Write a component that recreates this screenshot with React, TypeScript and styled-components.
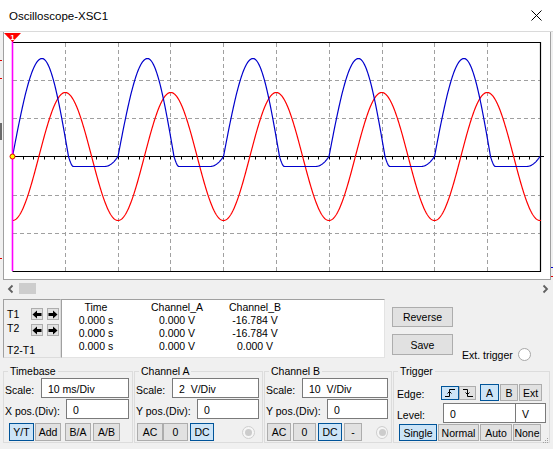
import React from 'react'
import styled, { createGlobalStyle } from 'styled-components'

const GlobalStyle = createGlobalStyle`
  html, body { margin: 0; padding: 0; background: #f0f0f0; }
  body { font-family: "Liberation Sans", Arial, sans-serif; font-size: 10.5px; color: #000; }
  * { box-sizing: border-box; }
`

// scope trace geometry (page coordinates)
const P = 105.5
const X0 = 12.5
const AXIS = 156.5

const blueAt = (x: number) => {
  const t = (((x - X0) % P) + P) % P
  let v
  if (t < 29.5) v = 98 * Math.sin((Math.PI / 2) * (t / 29.5))
  else if (t < 56) v = 98 * Math.cos((Math.PI / 2) * ((t - 29.5) / 26.5))
  else if (t < 61) v = -10 * Math.sin((Math.PI / 2) * ((t - 56) / 5))
  else if (t < 92) v = -10
  else v = -10 + 10 * Math.pow((t - 92) / 13.5, 2)
  return AXIS - v
}

const redAt = (x: number) => AXIS + 64 * Math.cos((2 * Math.PI * (x - X0)) / P)

const trace = (fn: (x: number) => number, from: number, to: number) => {
  const pts: string[] = []
  for (let x = from; x <= to; x += 0.5) pts.push(`${x},${fn(x).toFixed(2)}`)
  return pts.join(' ')
}

const BLUE = trace(blueAt, 12.5, 540)
const RED = trace(redAt, 12.5, 541)
const VLINES = Array.from({ length: 9 }, (_, i) => Math.round(12 + (i + 1) * 52.8) + 0.5)
const HLINES = [80.5, 118.5, 195.5, 233.5]
const TICKS = Array.from({ length: 50 }, (_, i) => Math.round(12 + (i + 1) * 10.56) + 0.5)

const Window = styled.div`
  position: relative;
  width: 553px;
  height: 449px;
  background: #f0f0f0;
  overflow: hidden;
  display: flex;
  flex-direction: column;
`

const TitleBar = styled.div`
  height: 32px;
  flex: none;
  background: #fff;
  border-bottom: 1px solid #dadada;
  display: flex;
  align-items: center;
  justify-content: space-between;
  padding: 0 11px 0 9px;
  font-size: 11.5px;
`

const ScreenRow = styled.div`
  display: flex;
  height: 248px;
  flex: none;
`

const Gutter = styled.svg`
  flex: none;
  display: block;
`

const Screen = styled.div`
  flex: 1;
  background: #fff;
  border: 1px solid #a0a0a0;
  border-top: none;
  svg { display: block; }
`

const ScrollBar = styled.div`
  height: 17px;
  flex: none;
  margin: 0 2px 0 3px;
  display: flex;
  align-items: center;
  justify-content: space-between;
`

const ScrollLeft = styled.div`
  display: flex;
  align-items: center;
`

const Thumb = styled.div`
  width: 17px;
  height: 11px;
  background: #cdcdcd;
  margin-left: 1px;
`

const CursorRow = styled.div`
  display: flex;
  height: 59px;
  margin: 2px 0 0 3px;
  flex: none;
`

const CursorPanel = styled.div`
  width: 58px;
  border: 1px solid #dcdcdc;
  border-color: #a0a0a0 #dcdcdc #dcdcdc #a0a0a0;
  padding: 8px 0 0 3px;
  display: flex;
  flex-direction: column;
`

const CursorLine = styled.div<{ $mt?: number }>`
  display: flex;
  align-items: center;
  height: 12px;
  margin-top: ${p => p.$mt ?? 0}px;
`

const CursorName = styled.span<{ $dy?: number }>`
  width: 24px;
  flex: none;
  white-space: nowrap;
  position: relative;
  top: ${p => p.$dy ?? 0}px;
`

const ArrowBtn = styled.div<{ $ml?: number }>`
  width: 12px;
  height: 12px;
  margin-left: ${p => p.$ml ?? 0}px;
  background: #e1e1e1;
  border: 1px solid #adadad;
  display: flex;
  align-items: center;
  justify-content: center;
`

const Readout = styled.div`
  width: 324px;
  background: #fff;
  border: 1px solid;
  border-color: #a0a0a0 #e3e3e3 #e3e3e3 #a0a0a0;
  padding-top: 1px;
  display: grid;
  grid-template-columns: 68px 94px 62px;
  grid-auto-rows: 13px;
  align-content: start;
  line-height: 13px;
`

const Cell = styled.span`
  text-align: center;
  white-space: nowrap;
`

const SideButtons = styled.div`
  display: flex;
  flex-direction: column;
  gap: 7px;
  margin: 8px 0 0 7px;
`

const ExtTrigger = styled.div`
  display: flex;
  align-items: center;
  gap: 5px;
  align-self: flex-end;
  margin: 0 0 -3px 9px;
`

const Radio = styled.div<{ $ml?: number; $dim?: boolean }>`
  width: 13px;
  height: 13px;
  border-radius: 50%;
  margin-left: ${p => p.$ml ?? 0}px;
  border: 1px solid ${p => (p.$dim ? '#cfcfcf' : '#a8a8a8')};
  background: ${p => (p.$dim ? '#f6f6f6' : '#fff')};
  display: flex;
  align-items: center;
  justify-content: center;
  &::after {
    content: '';
    display: ${p => (p.$dim ? 'block' : 'none')};
    width: 7px;
    height: 7px;
    border-radius: 50%;
    background: #cccccc;
  }
`

const Groups = styled.div`
  display: flex;
  gap: 1px;
  margin: 7px 0 0 3px;
  flex: none;
`

const Group = styled.fieldset<{ $w: number }>`
  width: ${p => p.$w}px;
  height: 78px;
  min-width: 0;
  margin: 0;
  padding: 0 3px 0 0;
  border: 1px solid #dcdcdc;
  display: flex;
  flex-direction: column;
`

const Legend = styled.legend`
  margin-left: 4px;
  padding: 0 2px;
  line-height: 12px;
  font-size: 10.5px;
`

const FieldRow = styled.div<{ $mt?: number; $h?: number }>`
  display: flex;
  align-items: center;
  justify-content: space-between;
  height: ${p => p.$h ?? 20}px;
  margin-top: ${p => p.$mt ?? 0}px;
`

const Label = styled.span<{ $pl?: number; $w?: number }>`
  padding: 3px 0 0 ${p => p.$pl ?? 1}px;
  width: ${p => (p.$w ? `${p.$w}px` : 'auto')};
  flex: none;
  white-space: nowrap;
`

const TextBox = styled.div<{ $w: number; $ml?: number }>`
  width: ${p => p.$w}px;
  height: 20px;
  margin-left: ${p => p.$ml ?? 0}px;
  background: #fff;
  border: 1px solid #7a7a7a;
  padding: 1px 0 0 6px;
  display: flex;
  align-items: center;
  white-space: pre;
`

const ButtonRow = styled.div<{ $mt?: number; $h?: number }>`
  display: flex;
  align-items: center;
  height: ${p => p.$h ?? 18}px;
  margin-top: ${p => p.$mt ?? 0}px;
`

const Btn = styled.div<{ $w: number; $h?: number; $ml?: number; $on?: boolean }>`
  width: ${p => p.$w}px;
  height: ${p => p.$h ?? 18}px;
  margin-left: ${p => p.$ml ?? 0}px;
  flex: none;
  background: ${p => (p.$on ? '#cce4f7' : '#e1e1e1')};
  border: 1px solid ${p => (p.$on ? '#005499' : '#adadad')};
  display: flex;
  align-items: center;
  justify-content: center;
  white-space: nowrap;
`

const Grip = styled.svg`
  position: absolute;
  right: 4px;
  bottom: 5px;
`

const LeftArrow = () => (
  <svg width="10" height="9" viewBox="0 0 10 9">
    <path d="M0.5 4.5 L5 0.5 L5 3 L9.5 3 L9.5 6 L5 6 L5 8.5 Z" fill="#000" />
  </svg>
)

const RightArrow = () => (
  <svg width="10" height="9" viewBox="0 0 10 9">
    <path d="M9.5 4.5 L5 0.5 L5 3 L0.5 3 L0.5 6 L5 6 L5 8.5 Z" fill="#000" />
  </svg>
)

const RisingEdge = () => (
  <svg width="12" height="10" viewBox="0 0 12 10">
    <path d="M1 8.5 H5.5 V1.5 H11" fill="none" stroke="#000" strokeWidth="1" />
    <path d="M3.5 5.5 L5.5 3.5 L7.5 5.5" fill="none" stroke="#000" strokeWidth="1" />
  </svg>
)

const FallingEdge = () => (
  <svg width="12" height="10" viewBox="0 0 12 10">
    <path d="M1 1.5 H5.5 V8.5 H11" fill="none" stroke="#000" strokeWidth="1" />
    <path d="M3.5 4.5 L5.5 6.5 L7.5 4.5" fill="none" stroke="#000" strokeWidth="1" />
  </svg>
)

const ScopeScreen = () => (
  <svg width="546" height="247" viewBox="4 32 546 247">
    {VLINES.map(x => (
      <line key={x} x1={x} y1={43} x2={x} y2={271} stroke="#a0a0a0" strokeDasharray="4 3" />
    ))}
    {HLINES.map(y => (
      <line key={y} x1={13} y1={y} x2={540} y2={y} stroke="#a0a0a0" strokeDasharray="4 3" />
    ))}
    <path d="M12.5 42.5 H540.5 V271.5 H12.5" fill="none" stroke="#000" strokeWidth="1.2" />
    <line x1={12} y1={AXIS} x2={544} y2={AXIS} stroke="#000" strokeWidth="1.2" />
    {TICKS.map(x => (
      <line key={x} x1={x} y1={157} x2={x} y2={159.5} stroke="#000" />
    ))}
    <polyline points={RED} fill="none" stroke="#ff0000" strokeWidth="1.2" />
    <polyline points={BLUE} fill="none" stroke="#0000cc" strokeWidth="1.2" />
    <line x1={12.5} y1={33} x2={12.5} y2={271} stroke="#ff00ff" strokeWidth="1.6" />
    <circle cx={12.5} cy={AXIS} r={2.5} fill="#ffff00" stroke="#e00000" strokeWidth="1" />
    <polygon points="4,33 21,33 12.5,42" fill="#ff0000" />
    <text x={12.5} y={39.5} fill="#fff" fontSize="8" fontWeight="bold" textAnchor="middle" fontFamily="Liberation Sans, Arial, sans-serif">
      1
    </text>
  </svg>
)

const App = () => {
  return (
    <Window>
      <GlobalStyle />
      <TitleBar>
        <span>Oscilloscope-XSC1</span>
        <svg width="11" height="11" viewBox="0 0 11 11">
          <path d="M0.5 0.5 L10.5 10.5 M10.5 0.5 L0.5 10.5" stroke="#000" strokeWidth="1" />
        </svg>
      </TitleBar>

      <ScreenRow>
        <Gutter width="3" height="248" viewBox="0 32 3 248">
          <rect x="0" y="60" width="2" height="1" fill="#e00000" />
          <rect x="0" y="78" width="2" height="1" fill="#e00000" />
          <rect x="0" y="123" width="2" height="17" fill="#6a6a6a" />
          <rect x="0" y="258" width="2" height="1" fill="#e00000" />
        </Gutter>
        <Screen>
          <ScopeScreen />
        </Screen>
        <Gutter width="2" height="248" viewBox="0 32 2 248">
          <rect x="0" y="267" width="2" height="1" fill="#0000cc" />
          <rect x="0" y="276" width="2" height="1" fill="#e00000" />
        </Gutter>
      </ScreenRow>

      <ScrollBar>
        <ScrollLeft>
          <svg width="15" height="12" viewBox="0 0 15 12">
            <path d="M9.5 2.5 L6 6 L9.5 9.5" fill="none" stroke="#606060" strokeWidth="1.8" />
          </svg>
          <Thumb />
        </ScrollLeft>
        <svg width="12" height="12" viewBox="0 0 12 12">
          <path d="M4.5 2.5 L8 6 L4.5 9.5" fill="none" stroke="#606060" strokeWidth="1.8" />
        </svg>
      </ScrollBar>

      <CursorRow>
        <CursorPanel>
          <CursorLine>
            <CursorName>T1</CursorName>
            <ArrowBtn><LeftArrow /></ArrowBtn>
            <ArrowBtn $ml={4}><RightArrow /></ArrowBtn>
          </CursorLine>
          <CursorLine $mt={4}>
            <CursorName $dy={-2}>T2</CursorName>
            <ArrowBtn><LeftArrow /></ArrowBtn>
            <ArrowBtn $ml={4}><RightArrow /></ArrowBtn>
          </CursorLine>
          <CursorLine $mt={8}>
            <CursorName>T2-T1</CursorName>
          </CursorLine>
        </CursorPanel>

        <Readout>
          <Cell>Time</Cell>
          <Cell>Channel_A</Cell>
          <Cell>Channel_B</Cell>
          <Cell>0.000 s</Cell>
          <Cell>0.000 V</Cell>
          <Cell>-16.784 V</Cell>
          <Cell>0.000 s</Cell>
          <Cell>0.000 V</Cell>
          <Cell>-16.784 V</Cell>
          <Cell>0.000 s</Cell>
          <Cell>0.000 V</Cell>
          <Cell>0.000 V</Cell>
        </Readout>

        <SideButtons>
          <Btn $w={61} $h={20}>Reverse</Btn>
          <Btn $w={61} $h={21}>Save</Btn>
        </SideButtons>

        <ExtTrigger>
          <span>Ext. trigger</span>
          <Radio />
        </ExtTrigger>
      </CursorRow>

      <Groups>
        <Group $w={130}>
          <Legend>Timebase</Legend>
          <FieldRow $mt={1}>
            <Label>Scale:</Label>
            <TextBox $w={88}>10 ms/Div</TextBox>
          </FieldRow>
          <FieldRow $mt={1}>
            <Label>X pos.(Div):</Label>
            <TextBox $w={63}>0</TextBox>
          </FieldRow>
          <ButtonRow $mt={4}>
            <Btn $w={25} $ml={5} $on>Y/T</Btn>
            <Btn $w={26} $ml={1}>Add</Btn>
            <Btn $w={26} $ml={4}>B/A</Btn>
            <Btn $w={27} $ml={2}>A/B</Btn>
          </ButtonRow>
        </Group>

        <Group $w={129}>
          <Legend>Channel A</Legend>
          <FieldRow $mt={1}>
            <Label>Scale:</Label>
            <TextBox $w={87}>2  V/Div</TextBox>
          </FieldRow>
          <FieldRow $mt={1}>
            <Label>Y pos.(Div):</Label>
            <TextBox $w={62}>0</TextBox>
          </FieldRow>
          <ButtonRow $mt={4}>
            <Btn $w={26} $ml={2}>AC</Btn>
            <Btn $w={25}>0</Btn>
            <Btn $w={24} $ml={2} $on>DC</Btn>
            <Radio $ml={28} $dim />
          </ButtonRow>
        </Group>

        <Group $w={128}>
          <Legend>Channel B</Legend>
          <FieldRow $mt={1}>
            <Label>Scale:</Label>
            <TextBox $w={86}>10  V/Div</TextBox>
          </FieldRow>
          <FieldRow $mt={1}>
            <Label>Y pos.(Div):</Label>
            <TextBox $w={61}>0</TextBox>
          </FieldRow>
          <ButtonRow $mt={4}>
            <Btn $w={24} $ml={2}>AC</Btn>
            <Btn $w={23} $ml={2}>0</Btn>
            <Btn $w={24} $ml={2} $on>DC</Btn>
            <Btn $w={18} $ml={2}>-</Btn>
            <Radio $ml={14} $dim />
          </ButtonRow>
        </Group>

        <Group $w={157}>
          <Legend>Trigger</Legend>
          <ButtonRow $mt={7} $h={17}>
            <Label $pl={3} $w={47}>Edge:</Label>
            <Btn $w={18} $h={14} $on><RisingEdge /></Btn>
            <Btn $w={17} $h={14}><FallingEdge /></Btn>
            <Btn $w={19} $h={17} $ml={4} $on>A</Btn>
            <Btn $w={18} $h={17} $ml={1}>B</Btn>
            <Btn $w={23} $h={17} $ml={1}>Ext</Btn>
          </ButtonRow>
          <FieldRow $mt={2}>
            <Label $pl={3}>Level:</Label>
            <ButtonRow $h={20}>
              <TextBox $w={73}>0</TextBox>
              <TextBox $w={31} $ml={-1}>V</TextBox>
            </ButtonRow>
          </FieldRow>
          <ButtonRow $mt={1} $h={17}>
            <Btn $w={38} $h={17} $ml={5} $on>Single</Btn>
            <Btn $w={41} $h={17} $ml={1}>Normal</Btn>
            <Btn $w={32} $h={17} $ml={1}>Auto</Btn>
            <Btn $w={28} $h={17} $ml={1}>None</Btn>
          </ButtonRow>
        </Group>
      </Groups>

      <Grip width="7" height="7" viewBox="0 0 7 7">
        <rect x="5" y="1" width="1" height="1" fill="#a0a0a0" />
        <rect x="3" y="3" width="1" height="1" fill="#a0a0a0" />
        <rect x="5" y="3" width="1" height="1" fill="#a0a0a0" />
        <rect x="1" y="5" width="1" height="1" fill="#a0a0a0" />
        <rect x="3" y="5" width="1" height="1" fill="#a0a0a0" />
        <rect x="5" y="5" width="1" height="1" fill="#a0a0a0" />
      </Grip>
    </Window>
  )
}

export default App
